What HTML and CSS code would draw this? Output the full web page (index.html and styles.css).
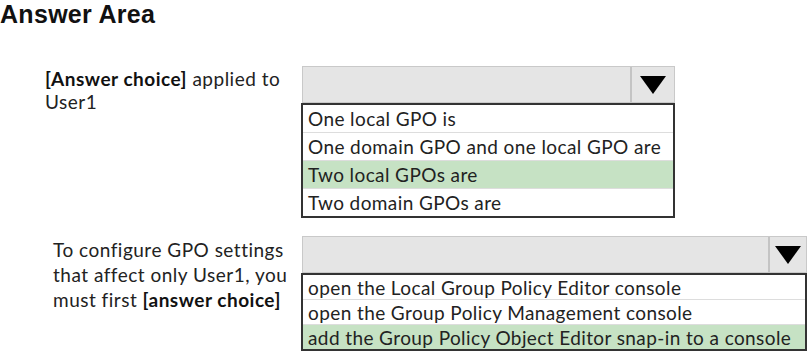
FILE: index.html
```html
<!DOCTYPE html>
<html lang="en">
  <head>
    <meta charset="UTF-8">
    <title>Answer Area</title>
    <link rel="stylesheet" href="styles.css">
  </head>
  <body>
    <div id="main">
      <h1 class="title">Answer Area</h1>

      <div class="question question_first">
        <div class="question_text">
          <b>[Answer choice]</b> applied to<br>User1
        </div>
        <div class="dropdown dropdown_first">
          <div class="select">
            <div class="select_field"></div>
            <div class="select_arrow"><span class="triangle"></span></div>
          </div>
          <div class="options">
            <div class="option">One local GPO is</div>
            <div class="option">One domain GPO and one local GPO are</div>
            <div class="option selected">Two local GPOs are</div>
            <div class="option">Two domain GPOs are</div>
          </div>
        </div>
      </div>

      <div class="question question_second">
        <div class="question_text">
          To configure GPO settings<br>that affect only User1, you<br>must first <b>[answer choice]</b>
        </div>
        <div class="dropdown dropdown_second">
          <div class="select">
            <div class="select_field"></div>
            <div class="select_arrow"><span class="triangle"></span></div>
          </div>
          <div class="options">
            <div class="option">open the Local Group Policy Editor console</div>
            <div class="option">open the Group Policy Management console</div>
            <div class="option selected">add the Group Policy Object Editor snap-in to a console</div>
          </div>
        </div>
      </div>
    </div>
  </body>
</html>
```

FILE: styles.css
```css
body {
  margin: 0;
  background-color: #ffffff;
  color: #222222;
  font-family: Lato, "Open Sans", sans-serif;
}
.title {
  margin: 0;
  font-family: "Liberation Sans", Arial, sans-serif;
  font-size: 25px;
  font-weight: 700;
  line-height: 28px;
  letter-spacing: 0.3px;
  color: #111111;
}
.question {
  display: flex;
  flex-direction: row;
}
.question_first {
  margin-top: 38px;
  padding-left: 45px;
}
.question_second {
  margin-top: 18px;
  padding-left: 53px;
}
.question_text {
  font-size: 19px;
  line-height: 23px;
  letter-spacing: 0.5px;
  padding-top: 1px;
}
.question_first .question_text {
  width: 256px;
}
.question_second .question_text {
  width: 248px;
  line-height: 25px;
}
.question_text b {
  font-weight: 700;
  color: #111111;
}
.dropdown_first {
  width: 374px;
}
.dropdown_second {
  width: 506px;
}
.select {
  display: flex;
  flex-direction: row;
  height: 35px;

  background-color: #e5e5e5;
  border: 1px solid #c9c9c9;
  margin-left: 1px;
}
.select_field {
  flex: 1;
}
.select_arrow {
  width: 42px;

  display: flex;
  justify-content: center;
  align-items: center;

  border-left: 2px solid #c4c4c4;
}
.dropdown_second .select_arrow {
  width: 36px;
}
.triangle {
  width: 0;
  height: 0;

  border-left: 13px solid transparent;
  border-right: 13px solid transparent;
  border-top: 18px solid #000000;
}
.options {
  border: 2px solid #333333;
}
.option {
  height: 27px;
  padding-left: 5px;

  font-size: 19px;
  line-height: 28px;
  letter-spacing: 0.4px;

  border-top: 1px solid #dddddd;
}
.option:first-child {
  border-top: none;
}
.dropdown_second .option {
  height: 24px;
  line-height: 25px;
}
.selected {
  background-color: #c6e2c4;
}
```
